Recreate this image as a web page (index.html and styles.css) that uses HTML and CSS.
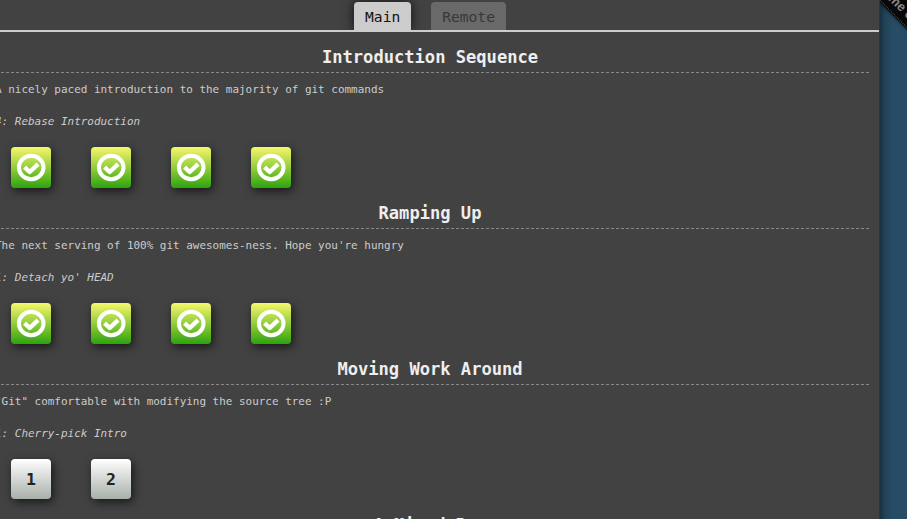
FILE: index.html
```
<!DOCTYPE html>
<html lang="en">
<head>
<meta charset="utf-8">
<title>Levels</title>
<link rel="stylesheet" href="styles.css">
</head>
<body>
<svg class="defs" width="0" height="0"><symbol id="ok" viewBox="0 0 30 30"><ellipse cx="15.2" cy="14.5" rx="12.3" ry="11.7" fill="none" stroke="#fff" stroke-width="4"/><path d="M8.6 14.2l5.1 4.8 8.3-7.8" fill="none" stroke="#fff" stroke-width="4.4" stroke-linejoin="round"/></symbol></svg>
<div class="ribbon"><span>Fork me on GitHub</span></div>
<main class="panel">
  <nav class="tabs"><div class="tab active">Main</div><div class="tab">Remote</div></nav>
  <section class="series">
    <h3>Introduction Sequence</h3>
    <p>A nicely paced introduction to the majority of git commands</p>
    <p class="name">4: Rebase Introduction</p>
    <div class="levels"><div class="level solved"><svg><use href="#ok"/></svg></div><div class="level solved"><svg><use href="#ok"/></svg></div><div class="level solved"><svg><use href="#ok"/></svg></div><div class="level solved"><svg><use href="#ok"/></svg></div></div>
  </section>
  <section class="series">
    <h3>Ramping Up</h3>
    <p>The next serving of 100% git awesomes-ness. Hope you're hungry</p>
    <p class="name">1: Detach yo' HEAD</p>
    <div class="levels"><div class="level solved"><svg><use href="#ok"/></svg></div><div class="level solved"><svg><use href="#ok"/></svg></div><div class="level solved"><svg><use href="#ok"/></svg></div><div class="level solved"><svg><use href="#ok"/></svg></div></div>
  </section>
  <section class="series">
    <h3>Moving Work Around</h3>
    <p>"Git" comfortable with modifying the source tree :P</p>
    <p class="name">1: Cherry-pick Intro</p>
    <div class="levels"><div class="level">1</div><div class="level">2</div></div>
  </section>
  <section class="series">
    <h3>A Mixed Bag</h3>
  </section>
</main>
</body>
</html>
```
FILE: styles.css
```
* { box-sizing: border-box; }
html, body { margin: 0; height: 519px; overflow: hidden; }
body { position: relative; background: #274d66; font-family: "DejaVu Sans Mono", monospace; }
.defs { display: block; }
.panel { position: relative; z-index: 3; width: 880px; height: 519px; overflow: hidden; background: #424242; border-right: 1px solid #333; }
body::after { content: ""; position: absolute; left: 880px; top: 0; width: 14px; height: 519px; background: linear-gradient(90deg, rgba(0,0,0,.38), rgba(0,0,0,.12) 40%, transparent); }
.tabs { display: flex; justify-content: center; gap: 20px; height: 32px; padding-top: 2px; padding-right: 19px; border-bottom: 2px solid #ccc; }
.tab { height: 28px; padding: 0 11px; border-radius: 4px 4px 0 0; background: #696969; color: #383838; font-size: 14.6px; line-height: 30px; font-weight: 400; }
.active { background: #ccc; color: #111; box-shadow: 0 0 12px rgba(0,0,0,.75); clip-path: inset(-12px -14px 0 -14px); }
.series { height: 156px; margin-left: -9px; width: 878px; padding-top: 10px; }
h3 { height: 31px; margin: 0; border-bottom: 1px dashed #888; color: #eee; font-size: 17.1px; font-weight: 700; line-height: 31px; text-align: center; }
p { height: 32px; margin: 0; padding-left: 4px; color: #ccc; font-size: 10.96px; line-height: 34px; white-space: pre; }
.name { font-style: italic; }
.levels { display: flex; gap: 40px; padding: 10px 0 0 20px; }
.level { display: flex; align-items: center; justify-content: center; width: 40px; height: 40px; border-radius: 4px; background: linear-gradient(#fff, #a8b0a9); box-shadow: 2px 3px 10px rgba(0,0,0,.65); color: #222; font-size: 16.5px; font-weight: 700; }
.solved { height: 41px; background: linear-gradient(#f7f76b, #2ea30f); }
.level svg { width: 30px; height: 30px; }
.ribbon { position: absolute; z-index: 2; left: 806px; top: 1px; width: 210px; height: 27px; transform: rotate(45deg); background: #080808; box-shadow: 0 0 4px rgba(0,0,0,.6); color: #888; font: 700 13px/29px "Liberation Sans", sans-serif; text-align: center; padding-right: 1px; }
.ribbon::after { content: ""; position: absolute; left: 0; right: 0; bottom: 1px; border-bottom: 1px dotted #555; }
```
